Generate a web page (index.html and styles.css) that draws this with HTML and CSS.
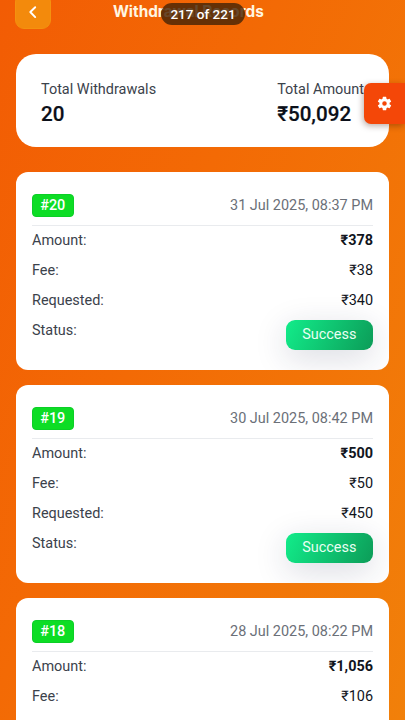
FILE: index.html
```
<!DOCTYPE html>
<html lang="en">
<head>
<meta charset="utf-8">
<meta name="viewport" content="width=device-width, initial-scale=1">
<title>Withdrawal Records</title>
<link rel="stylesheet" href="styles.css">
</head>
<body>
<header class="topbar">
  <button class="back" aria-label="Back"><svg width="36" height="36" viewBox="0 0 36 36"><path d="M19.2 13.2 14.3 18l4.9 5.1" fill="none" stroke="#fff" stroke-width="1.9" stroke-linecap="round" stroke-linejoin="round"/></svg></button>
  <h1 class="title">Withdrawal Records</h1>
</header>
<div class="counter">217 of 221</div>
<button class="settings" aria-label="Settings"><svg width="17" height="17" viewBox="0 0 24 24"><path fill="#fff" d="M19.14 12.94c.04-.3.06-.61.06-.94s-.02-.64-.07-.94l2.03-1.58a.49.49 0 0 0 .12-.61l-1.92-3.32a.49.49 0 0 0-.59-.22l-2.39.96a7 7 0 0 0-1.62-.94l-.36-2.54a.48.48 0 0 0-.48-.41h-3.84a.48.48 0 0 0-.47.41l-.36 2.54c-.59.24-1.13.57-1.62.94l-2.39-.96a.48.48 0 0 0-.59.22L2.74 8.87a.48.48 0 0 0 .12.61l2.03 1.58a7 7 0 0 0 0 1.88l-2.03 1.58a.49.49 0 0 0-.12.61l1.92 3.32c.12.22.37.29.59.22l2.39-.96c.5.38 1.03.7 1.62.94l.36 2.54c.05.24.24.41.48.41h3.84c.24 0 .44-.17.47-.41l.36-2.54a7 7 0 0 0 1.62-.94l2.39.96c.22.08.47 0 .59-.22l1.92-3.32a.48.48 0 0 0-.12-.61l-2.03-1.58zM12 15.2a3.2 3.2 0 1 1 0-6.4 3.2 3.2 0 0 1 0 6.4z"/></svg></button>
<main class="content">
  <section class="summary">
    <div><div class="label">Total Withdrawals</div><div class="total">20</div></div>
    <div><div class="label">Total Amount</div><div class="total">₹50,092</div></div>
  </section>
  <article class="record">
    <div class="head"><span class="badge">#20</span><time class="date">31 Jul 2025, 08:37 PM</time></div>
    <div class="row"><span>Amount:</span><b class="value">₹378</b></div>
    <div class="row"><span>Fee:</span><span class="value">₹38</span></div>
    <div class="row"><span>Requested:</span><span class="value">₹340</span></div>
    <div class="row"><span>Status:</span><span class="status">Success</span></div>
  </article>
  <article class="record">
    <div class="head"><span class="badge">#19</span><time class="date">30 Jul 2025, 08:42 PM</time></div>
    <div class="row"><span>Amount:</span><b class="value">₹500</b></div>
    <div class="row"><span>Fee:</span><span class="value">₹50</span></div>
    <div class="row"><span>Requested:</span><span class="value">₹450</span></div>
    <div class="row"><span>Status:</span><span class="status">Success</span></div>
  </article>
  <article class="record">
    <div class="head"><span class="badge">#18</span><time class="date">28 Jul 2025, 08:22 PM</time></div>
    <div class="row"><span>Amount:</span><b class="value">₹1,056</b></div>
    <div class="row"><span>Fee:</span><span class="value">₹106</span></div>
  </article>
</main>
</body>
</html>
```
FILE: styles.css
```
* { box-sizing: border-box; }
html, body { height: 720px; overflow: hidden; }
body {
  margin: 0;
  font-family: Roboto, "Liberation Sans", sans-serif;
  font-size: 14.45px;
  color: #3b424b;
  background: linear-gradient(112deg, #f25c04 0%, #f36a05 40%, #f1800a 100%);
}
button { border: 0; padding: 0; }
.topbar { height: 54px; display: flex; padding-left: 15px; }
.back {
  width: 36px; height: 36px; margin-top: -7px;
  border: 1px solid #f4920f; border-radius: 9px;
  background: #f38a0c;
  display: grid; place-items: center;
}
.title {
  margin: 2px 0 0 62px;
  font: 700 15.3px/20px Inter, sans-serif;
  color: #fff6e2;
  white-space: nowrap;
}
.counter {
  position: absolute; left: 161px; top: 3px;
  width: 84px; height: 22px; border-radius: 11px;
  background: rgba(74, 38, 7, .84);
  color: #fff;
  font-size: 13.5px; font-weight: 500; line-height: 23px;
  text-align: center;
}
.settings {
  position: absolute; left: 364px; top: 83px;
  width: 41px; height: 41px;
  border-radius: 7px 0 0 7px;
  background: #f44708;
  box-shadow: -1px 2px 6px rgba(60, 20, 0, .35);
  display: grid; place-items: center;
}
.settings svg, .back svg { display: block; }
.content { padding: 0 16px; }
.summary {
  height: 93px; margin-bottom: 24.5px; padding: 26px 25px 0;
  display: flex; justify-content: space-between;
  border-radius: 20px; background: #fff;
}
.label { line-height: 20px; }
.total {
  font-size: 20.6px; font-weight: 500; line-height: 29px;
  -webkit-text-stroke: .2px #0b0f19;
  color: #0b0f19;
}
.record {
  height: 198px; margin-bottom: 15.2px; padding: 16px 16px 0;
  border-radius: 12px; background: #fff;
  overflow: hidden;
}
.head {
  height: 38px; padding: 7px 0 8px;
  border-bottom: 1px solid #e9ebee;
  display: flex; align-items: center; justify-content: space-between;
}
.badge {
  width: 41.5px; height: 23px;
  border: 1px solid #0ccf27; border-radius: 4px;
  background: #0ddd25; color: #fff;
  font-weight: 500; line-height: 21px; text-align: center;
}
.date { color: #6b7078; }
.row {
  height: 30px; line-height: 29px;
  display: flex; justify-content: space-between;
}
.value { color: #11151d; }
.status {
  width: 87.5px; height: 30px; margin-top: 4px;
  border-radius: 9px;
  background: linear-gradient(115deg, #12ec8a, #0c9c58);
  box-shadow: 0 8px 32px rgba(31, 38, 80, .17);
  color: #e9fff3; font-weight: 400;
  text-align: center;
}
```
